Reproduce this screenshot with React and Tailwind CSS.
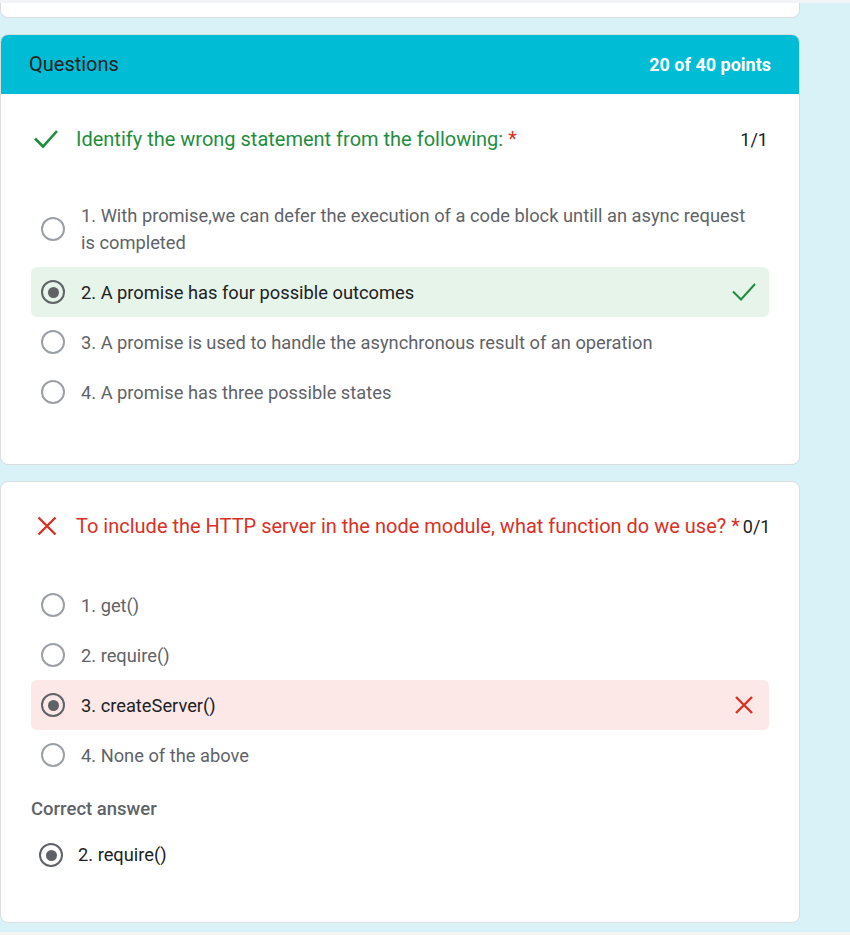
import React from 'react';

const FONT = { fontFamily: 'Roboto, "Liberation Sans", sans-serif' };

const CheckIcon = ({ thick }) => (
  <svg width="24" height="24" viewBox="0 0 24 24" className="shrink-0">
    <polyline
      points="1,11.5 9,19.5 23,4"
      fill="none"
      stroke="#1e8e3e"
      strokeWidth={thick ? 2.6 : 2}
    />
  </svg>
);

const CrossIcon = ({ size = 24, glyph = 17 }) => {
  const a = (size - glyph) / 2;
  const b = a + glyph;
  return (
    <svg width={size} height={size} viewBox={`0 0 ${size} ${size}`} className="shrink-0">
      <path d={`M${a} ${a}L${b} ${b}M${b} ${a}L${a} ${b}`} stroke="#d93025" strokeWidth="2.4" fill="none" />
    </svg>
  );
};

const Radio = ({ checked }) => (
  <span
    className={`w-6 h-6 shrink-0 rounded-full border-2 flex items-center justify-center ${
      checked ? 'border-[#5f6368]' : 'border-[#9aa0a6]'
    }`}
  >
    {checked && <span className="w-[11px] h-[11px] rounded-full bg-[#5f6368]" />}
  </span>
);

function Option({ text, state, selected, tall }) {
  const bg = state === 'right' ? 'bg-[#e6f4ea]' : state === 'wrong' ? 'bg-[#fce8e6]' : '';
  return (
    <div
      className={`flex items-center gap-4 pl-[10px] pr-[13px] rounded-md ${bg} ${
        tall ? 'py-[11px]' : 'h-[50px]'
      }`}
    >
      <Radio checked={selected} />
      <div
        className={`flex-1 text-[18.3px] leading-[27px] ${
          selected ? 'text-[#202124]' : 'text-[#5f6368]'
        }`}
      >
        {text}
      </div>
      {state === 'right' && <CheckIcon />}
      {state === 'wrong' && <CrossIcon glyph={16} />}
    </div>
  );
}

function QuestionTitle({ ok, text, score }) {
  return (
    <div className="flex items-center h-[30px]">
      <div className="w-[45px] shrink-0 flex pl-[3px]">
        {ok ? <CheckIcon thick /> : <CrossIcon size={26} glyph={17} />}
      </div>
      <div
        className={`flex-1 whitespace-nowrap text-[20px] leading-[28px] ${
          ok ? 'text-[#1e8e3e]' : 'text-[#d93025]'
        }`}
      >
        {text} <span className="text-[#d93025]">*</span>
      </div>
      <div className="ml-[3px] text-[18px] text-[#202124] pr-[1px]">{score}</div>
    </div>
  );
}

export default function App() {
  return (
    <div style={FONT} className="w-[850px] h-[935px] bg-[#d9f2f8] overflow-hidden flex flex-col">
      <div className="h-[3px] bg-[#f1f3f4]" />
      <div className="w-[800px] flex flex-col">
        <div className="h-[15px] bg-white border border-t-0 border-[#dadce0] rounded-b-lg" />

        <div className="mt-4 bg-white border border-[#dadce0] rounded-lg overflow-hidden">
          <div className="h-[60px] bg-[#00bcd4] flex items-center justify-between pl-[29px] pr-[29px] -mx-px -mt-px">
            <div className="text-[20px] text-[#202124]">Questions</div>
            <div className="text-[18px] font-bold text-white">20 of 40 points</div>
          </div>
          <div className="px-[30px] pt-[30px] pb-[47px]">
            <QuestionTitle ok text="Identify the wrong statement from the following:" score="1/1" />
            <div className="mt-[37px] flex flex-col">
              <Option tall text="1. With promise,we can defer the execution of a code block untill an async request is completed" />
              <Option state="right" selected text="2. A promise has four possible outcomes" />
              <Option text="3. A promise is used to handle the asynchronous result of an operation" />
              <Option text="4. A promise has three possible states" />
            </div>
          </div>
        </div>

        <div className="mt-4 bg-white border border-[#dadce0] rounded-lg px-[30px] pt-[29px] pb-[42px]">
          <QuestionTitle text="To include the HTTP server in the node module, what function do we use?" score="0/1" />
          <div className="mt-[39px] flex flex-col">
            <Option text="1. get()" />
            <Option text="2. require()" />
            <Option state="wrong" selected text="3. createServer()" />
            <Option text="4. None of the above" />
          </div>
          <div className="mt-[17px] text-[18.5px] leading-6 font-medium text-[#5f6368]">Correct answer</div>
          <div className="mt-[9px] h-[50px] flex items-center gap-[15px] pl-[8px]">
            <Radio checked />
            <div className="text-[18.3px] text-[#202124]">2. require()</div>
          </div>
        </div>
      </div>
      <div className="mt-auto h-[3px] bg-[#f1f3f4]" />
    </div>
  );
}
